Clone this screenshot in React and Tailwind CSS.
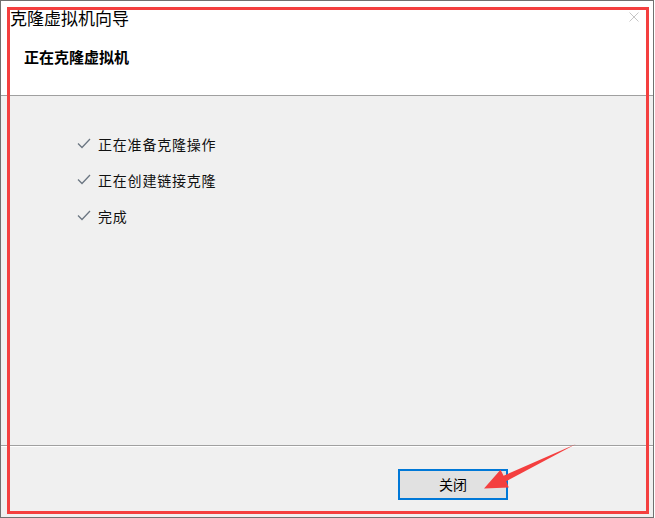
import React from "react"

const font = { fontFamily: '"Noto Sans CJK SC", "Noto Sans", sans-serif' }

const steps = ["正在准备克隆操作", "正在创建链接克隆", "完成"]

function Check() {
    return (
        <svg width="14" height="12" viewBox="0 0 14 12" className="shrink-0">
            <polyline points="1,5.5 5,9.5 13,1" fill="none" stroke="#6b7682" strokeWidth="1.3" />
        </svg>
    )
}

export default function App() {
    return (
        <div className="relative w-[655px] h-[518px] bg-white" style={font}>
            <div className="flex flex-col w-[654px] h-[518px] border border-[#707070] bg-[#f0f0f0]">
                <header className="relative h-[95px] bg-white border-b border-[#a0a0a0]">
                    <div className="pl-[9px] pt-[6px] text-[17px] leading-[22px] text-black">克隆虚拟机向导</div>
                    <svg width="10" height="10" viewBox="0 0 10 10" className="absolute left-[628px] top-[11px]">
                        <path d="M0.5 0.5 L9.5 9.5 M9.5 0.5 L0.5 9.5" stroke="#c6c6c6" strokeWidth="1" />
                    </svg>
                    <div className="pl-[23px] pt-[18px] text-[15px] leading-[20px] font-bold text-black">正在克隆虚拟机</div>
                </header>
                <main className="h-[350px] border-b border-[#a0a0a0] pt-[30px] pl-[76px]">
                    {steps.map(s => (
                        <div key={s} className="flex items-center gap-[7px] h-[36px] text-[14px] tracking-[0.8px] text-[#111]">
                            <Check />
                            <span>{s}</span>
                        </div>
                    ))}
                </main>
                <footer className="flex-1 border-t border-white pt-[22px] pl-[397px]">
                    <button className="w-[110px] h-[31px] border-2 border-[#0078d7] bg-[#e1e1e1] text-[14px] text-black flex items-center justify-center">
                        关闭
                    </button>
                </footer>
            </div>
            <div className="absolute left-[7px] top-[7px] w-[642px] h-[507px] border-[3px] border-[#f43f3f]" />
            <svg className="absolute left-0 top-0" width="655" height="518">
                <polygon points="576,444 506.2,481.2 508.8,487.6 484,488.5 500.5,469.8 503.6,475.8" fill="#f43f3f" />
            </svg>
        </div>
    )
}
